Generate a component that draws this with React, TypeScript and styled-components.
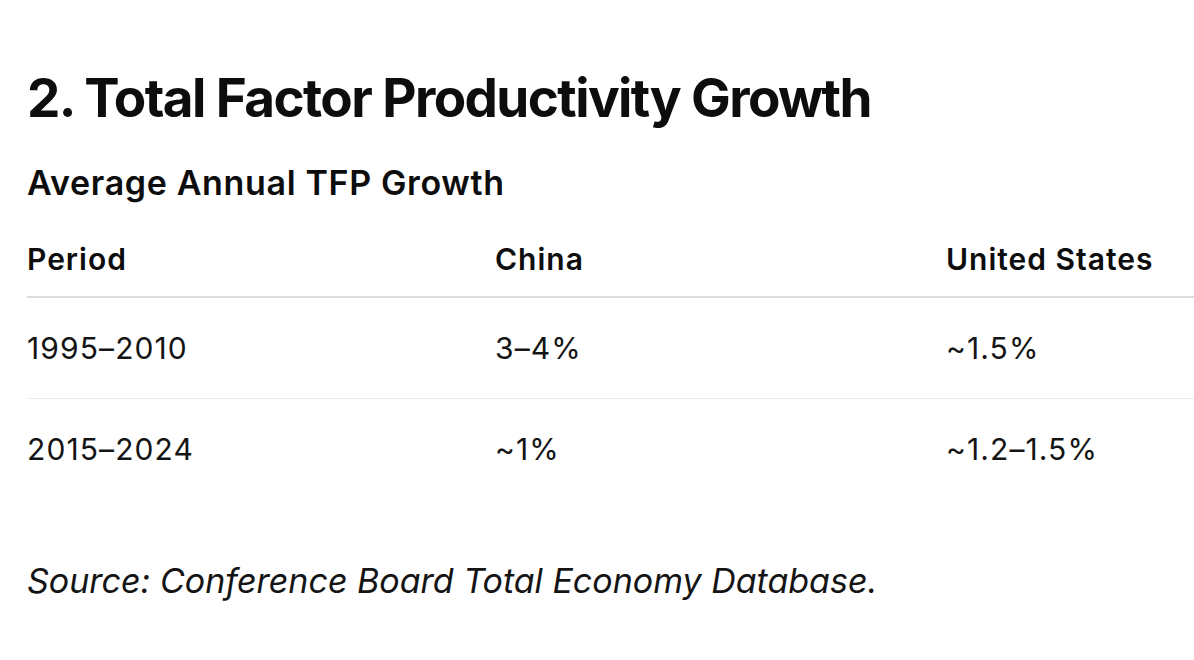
import styled, { createGlobalStyle } from "styled-components";

const GlobalStyle = createGlobalStyle`
  html, body {
    margin: 0;
    padding: 0;
    background: #ffffff;
    overflow: hidden;
  }
  body {
    font-family: Inter, "Noto Sans", sans-serif;
    color: #111111;
    -webkit-font-smoothing: antialiased;
  }
`;

const Page = styled.main`
  width: 1194px;
  height: 660px;
  padding: 66px 0 0 27px;
  box-sizing: border-box;
`;

const Title = styled.h2`
  margin: 0;
  font-size: 53px;
  line-height: 64px;
  font-weight: 700;
  letter-spacing: -1.6px;
  color: #0d0d0d;
`;

const Subtitle = styled.h3`
  margin: 31px 0 0;
  font-size: 34px;
  line-height: 44px;
  font-weight: 600;
  letter-spacing: 0.65px;
  color: #0d0d0d;
`;

const Table = styled.div`
  margin-top: 36px;
  display: grid;
  grid-template-columns: 468px 451px 1fr;
`;

const HeadCell = styled.div`
  font-size: 30px;
  line-height: 36px;
  font-weight: 600;
  letter-spacing: 1px;
  color: #0d0d0d;
  padding: 0 0 19px;
  border-bottom: 2px solid #dcdcdc;
`;

const Cell = styled.div<{ $last?: boolean }>`
  font-size: 30px;
  line-height: 36px;
  font-weight: 400;
  letter-spacing: 1.1px;
  color: #141414;
  padding: 32px 0;
  border-bottom: ${({ $last }) => ($last ? "none" : "1px solid #ececec")};
`;

const Source = styled.p`
  margin: 62px 0 0;
  font-size: 34px;
  line-height: 40px;
  font-style: italic;
  font-weight: 400;
  color: #141414;
`;

const rows = [
  ["1995–2010", "3–4%", "~1.5%"],
  ["2015–2024", "~1%", "~1.2–1.5%"],
];

export default function App() {
  return (
    <>
      <GlobalStyle />
      <Page>
        <Title>2. Total Factor Productivity Growth</Title>
        <Subtitle>Average Annual TFP Growth</Subtitle>
        <Table>
          <HeadCell>Period</HeadCell>
          <HeadCell>China</HeadCell>
          <HeadCell>United States</HeadCell>
          {rows.map((row, i) =>
            row.map((value, j) => (
              <Cell key={`${i}-${j}`} $last={i === rows.length - 1}>
                {value}
              </Cell>
            )),
          )}
        </Table>
        <Source>Source: Conference Board Total Economy Database.</Source>
      </Page>
    </>
  );
}
